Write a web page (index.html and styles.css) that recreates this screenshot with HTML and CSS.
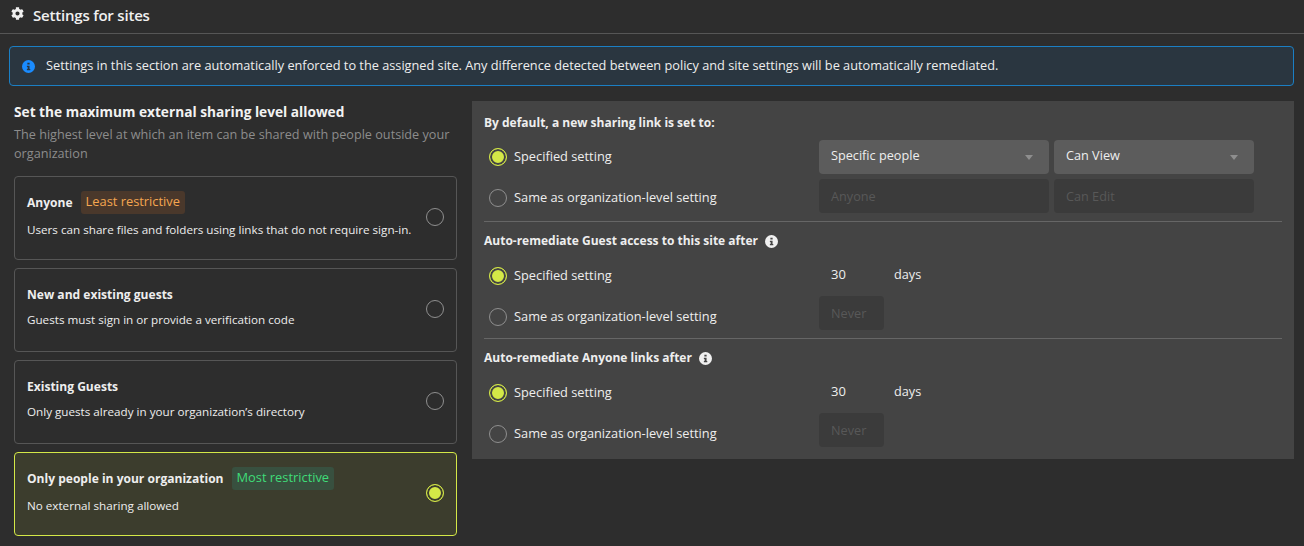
FILE: index.html
```html
<!DOCTYPE html>
<html lang="en">
<head>
<meta charset="utf-8">
<title>Settings for sites</title>
<link rel="stylesheet" href="styles.css">
</head>
<body>
<svg class="defs" width="0" height="0" aria-hidden="true">
  <symbol id="info" viewBox="0 0 16 16">
    <path fill-rule="evenodd" d="M8 0a8 8 0 1 1 0 16A8 8 0 0 1 8 0zM6.6 3.4v2.2h2.8V3.4zM6 7v1.5h.9v2.7H6v1.4h4.2v-1.4h-.9V7z"/>
  </symbol>
</svg>
<header class="page-head">
  <svg class="gear" viewBox="0 0 512 512" aria-hidden="true"><path d="M487.4 315.7l-42.6-24.6c4.3-23.2 4.3-47 0-70.2l42.6-24.6c4.9-2.8 7.1-8.6 5.5-14-11.1-35.6-30-67.8-54.7-94.6-3.8-4.1-10-5.1-14.8-2.3L380.8 110c-17.9-15.4-38.5-27.3-60.8-35.1V25.8c0-5.6-3.9-10.5-9.4-11.7-36.7-8.2-74.3-7.8-109.2 0-5.5 1.2-9.4 6.1-9.4 11.7V75c-22.2 7.9-42.8 19.8-60.8 35.1L88.7 85.5c-4.9-2.8-11-1.9-14.8 2.3-24.7 26.7-43.6 58.9-54.7 94.6-1.7 5.4.6 11.2 5.5 14L67.3 221c-4.3 23.2-4.3 47 0 70.2l-42.6 24.6c-4.9 2.8-7.1 8.6-5.5 14 11.1 35.6 30 67.8 54.7 94.6 3.8 4.1 10 5.1 14.8 2.3l42.6-24.6c17.9 15.4 38.5 27.3 60.8 35.1v49.2c0 5.6 3.9 10.5 9.4 11.7 36.7 8.2 74.3 7.8 109.2 0 5.5-1.2 9.4-6.1 9.4-11.7v-49.2c22.2-7.9 42.8-19.8 60.8-35.1l42.6 24.6c4.9 2.8 11 1.9 14.8-2.3 24.7-26.7 43.6-58.9 54.7-94.6 1.5-5.5-.7-11.3-5.6-14.1zM256 336c-44.1 0-80-35.9-80-80s35.9-80 80-80 80 35.9 80 80-35.9 80-80 80z"/></svg>
  <h1 class="page-title">Settings for sites</h1>
</header>
<div class="alert">
  <svg class="alert-icon"><use href="#info"/></svg>
  <span class="alert-text">Settings in this section are automatically enforced to the assigned site. Any difference detected between policy and site settings will be automatically remediated.</span>
</div>
<main class="content">
  <section class="levels">
    <h2 class="levels-title">Set the maximum external sharing level allowed</h2>
    <p class="levels-sub">The highest level at which an item can be shared with people outside your organization</p>
    <div class="cards">
      <div class="card">
        <div class="card-body">
          <div class="card-head card-head--badge"><span class="card-title">Anyone</span><span class="badge badge--least">Least restrictive</span></div>
          <p class="card-desc">Users can share files and folders using links that do not require sign-in.</p>
        </div>
        <span class="radio card-radio"></span>
      </div>
      <div class="card">
        <div class="card-body">
          <div class="card-head"><span class="card-title">New and existing guests</span></div>
          <p class="card-desc">Guests must sign in or provide a verification code</p>
        </div>
        <span class="radio card-radio"></span>
      </div>
      <div class="card">
        <div class="card-body">
          <div class="card-head"><span class="card-title">Existing Guests</span></div>
          <p class="card-desc">Only guests already in your organization’s directory</p>
        </div>
        <span class="radio card-radio"></span>
      </div>
      <div class="card card--on">
        <div class="card-body">
          <div class="card-head card-head--badge"><span class="card-title">Only people in your organization</span><span class="badge badge--most">Most restrictive</span></div>
          <p class="card-desc">No external sharing allowed</p>
        </div>
        <span class="radio radio--on card-radio"></span>
      </div>
    </div>
  </section>
  <section class="panel">
    <div class="group">
      <h3 class="group-title">By default, a new sharing link is set to:</h3>
      <div class="group-grid">
        <div class="options options--first">
          <div class="option"><span class="radio radio--on"></span>Specified setting</div>
          <div class="option"><span class="radio"></span>Same as organization-level setting</div>
        </div>
        <div class="controls">
          <div class="control-row">
            <div class="field field--select field--wide">Specific people<span class="caret"></span></div>
            <div class="field field--select field--mid">Can View<span class="caret"></span></div>
          </div>
          <div class="control-row">
            <div class="field field--off field--wide">Anyone</div>
            <div class="field field--off field--mid">Can Edit</div>
          </div>
        </div>
      </div>
    </div>
    <div class="group group--rule">
      <h3 class="group-title">Auto-remediate Guest access to this site after<svg class="tip"><use href="#info"/></svg></h3>
      <div class="group-grid">
        <div class="options">
          <div class="option"><span class="radio radio--on"></span>Specified setting</div>
          <div class="option"><span class="radio"></span>Same as organization-level setting</div>
        </div>
        <div class="controls">
          <div class="control-row"><div class="days"><span class="days-num">30</span><span>days</span></div></div>
          <div class="control-row"><div class="field field--off field--never">Never</div></div>
        </div>
      </div>
    </div>
    <div class="group group--rule">
      <h3 class="group-title">Auto-remediate Anyone links after<svg class="tip"><use href="#info"/></svg></h3>
      <div class="group-grid">
        <div class="options">
          <div class="option"><span class="radio radio--on"></span>Specified setting</div>
          <div class="option"><span class="radio"></span>Same as organization-level setting</div>
        </div>
        <div class="controls">
          <div class="control-row"><div class="days"><span class="days-num">30</span><span>days</span></div></div>
          <div class="control-row"><div class="field field--off field--never">Never</div></div>
        </div>
      </div>
    </div>
  </section>
</main>
</body>
</html>
```
FILE: styles.css
```css
* { box-sizing: border-box; }
html, body { margin: 0; height: 100%; }
body {
  background: #2d2d2d;
  color: #eeeeee;
  font-family: "Open Sans", "Noto Sans", sans-serif;
  font-size: 12.7px;
  line-height: 18px;
  overflow: hidden;
}
.defs { position: absolute; }
h1, h2, h3, p { margin: 0; }

.page-head {
  height: 34px;
  border-bottom: 1px solid #565656;
  display: flex;
  padding-left: 11px;
}
.gear { width: 13px; height: 13px; margin-top: 7px; fill: #f0f0f0; }
.page-title { font-size: 15px; font-weight: 600; margin: 6px 0 0 9px; color: #f0f0f0; letter-spacing: -0.2px; }

.alert {
  margin: 12px 10px 0 9px;
  height: 40px;
  border: 1px solid #1b7fc4;
  border-radius: 4px;
  background: #2a3640;
  display: flex;
  align-items: center;
  padding-left: 12px;
}
.alert-icon { width: 13px; height: 13px; margin-right: 11px; fill: #1a8cff; }
.alert-text { font-size: 12.74px; margin-bottom: 2px; }

.content { display: flex; padding: 15px 10px 0 14px; gap: 15px; align-items: flex-start; }

.levels { width: 443px; flex: none; }
.levels-title { font-size: 13.7px; font-weight: 700; margin-top: 2px; line-height: 18px; color: #f2f2f2; }
.levels-sub { color: #8c8c8c; line-height: 19px; margin-top: 4px; font-size: 12.67px; }
.cards { display: flex; flex-direction: column; gap: 8px; margin-top: 13px; }

.card {
  height: 84px;
  border: 1px solid #565656;
  border-radius: 4px;
  display: flex;
  align-items: center;
  padding: 0 12px 0 12px;
}
.card--on { border-color: #d4e847; background: #3c3d2d; }
.card-body { flex: 1; align-self: flex-start; padding-top: 14px; }
.card-head { display: flex; align-items: center; height: 24px; margin-bottom: 4px; }
.card-head--badge { height: 23px; margin-bottom: 7px; }
.card-title { font-weight: 700; font-size: 12.05px; }
.card-desc { line-height: 18px; font-size: 11.66px; }
.badge {
  margin-left: 8px;
  height: 23px;
  line-height: 21px;
  padding: 0 5px;
  border-radius: 3px;
  font-size: 12.85px;
}
.badge--least { background: #4a382b; color: #f5a650; }
.badge--most { background: #38503f; color: #3fdc78; }

.radio {
  width: 18px;
  height: 18px;
  border-radius: 50%;
  border: 1px solid #8f8f8f;
  flex: none;
  display: inline-block;
}
.radio--on {
  border-color: #d4e847;
  background: #d4e847;
  box-shadow: inset 0 0 0 2px #444444;
}
.card-radio { margin-bottom: 2px; }
.card--on .radio--on { box-shadow: inset 0 0 0 2px #3c3d2d; }

.panel { flex: 1; background: #444444; padding: 12px; }
.group--rule { border-top: 1px solid #666666; margin-top: 8px; padding-top: 8px; }
.group-title { font-size: 12px; font-weight: 700; line-height: 18px; height: 18px; padding-top: 2px; display: flex; align-items: center; }
.group--rule .group-title { padding-top: 4px; }
.tip { width: 13px; height: 13px; fill: #f0f0f0; margin-left: 7px; flex: none; }
.group-grid { display: flex; height: 82px; }
.options { width: 335px; padding-left: 5px; margin-top: 7px; font-size: 12.8px; }
.options--first { margin-top: 5px; }
.option { height: 41px; display: flex; align-items: center; gap: 7px; padding-bottom: 1px; }
.option .radio { margin-top: 1px; }
.controls { margin-top: 9px; display: flex; flex-direction: column; gap: 5px; }
.control-row { display: flex; gap: 5px; height: 34px; }
.field {
  height: 34px;
  border-radius: 4px;
  padding: 0 12px;
  display: flex;
  align-items: center;
}
.field--wide { width: 230px; }
.field--mid { width: 200px; }
.field--never { width: 65px; }
.field--select { background: #5c5c5c; justify-content: space-between; padding-bottom: 4px; }
.field--off { background: #3b3b3b; color: #585858; }
.caret {
  width: 0;
  height: 0;
  border-left: 4px solid transparent;
  border-right: 4px solid transparent;
  border-top: 5px solid #8e8e8e;
  margin: 5px 4px 0 0;
}
.days { display: flex; align-items: center; padding-left: 12px; }
.days-num { width: 63px; font-size: 13px; }
```
